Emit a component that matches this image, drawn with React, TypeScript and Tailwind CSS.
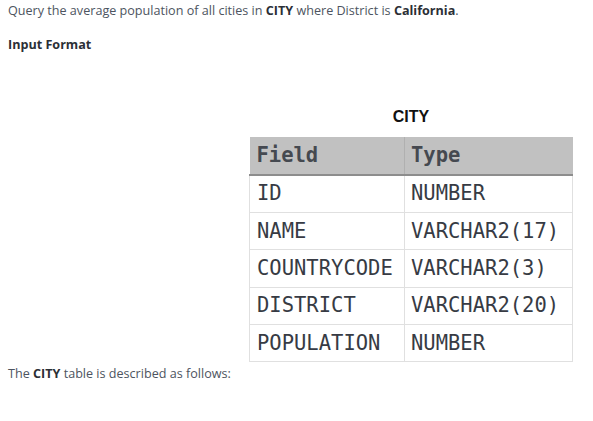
import React from "react";

const rows: [string, string][] = [
  ["ID", "NUMBER"],
  ["NAME", "VARCHAR2(17)"],
  ["COUNTRYCODE", "VARCHAR2(3)"],
  ["DISTRICT", "VARCHAR2(20)"],
  ["POPULATION", "NUMBER"],
];

export default function App() {
  return (
    <div className="w-[593px] h-[421px] bg-white text-[#4d5460] text-[12.6px] leading-[19px]" style={{ fontFamily: '"Open Sans", sans-serif' }}>
      <div className="pl-[8px] pt-[1px]">
        <p>
          Query the average population of all cities in <b className="text-[#2b2f36]">CITY</b> where District is{" "}
          <b className="text-[#2b2f36]">California</b>.
        </p>
        <p className="mt-[15px] font-bold text-[#2b2f36]">Input Format</p>
      </div>
      <div className="flex flex-col items-end pr-[20px] mt-[53px]">
        <div className="w-[324px] flex flex-col">
          <div className="text-center font-bold text-[16px] leading-[20px] text-[#111]" style={{ fontFamily: '"Liberation Sans", Arial, sans-serif' }}>CITY</div>
          <table className="mt-[10px] border-collapse text-[20.5px] text-[#373b44]" style={{ fontFamily: '"DejaVu Sans Mono", monospace' }}>
            <thead>
              <tr className="bg-[#c1c1c1] h-[38px] border-b-[2px] border-[#8d8d8d]">
                <th className="w-[155px] text-left font-bold pl-[7px] border-r border-[#b0b0b0] text-[#454950]">Field</th>
                <th className="text-left font-bold pl-[6px] text-[#454950]">Type</th>
              </tr>
            </thead>
            <tbody>
              {rows.map(([f, t]) => (
                <tr key={f} className="h-[37.4px] border-b border-[#e0e0e0]">
                  <td className="pl-[7px] border-l border-r border-[#e0e0e0]">{f}</td>
                  <td className="pl-[6px] border-r border-[#e0e0e0]">{t}</td>
                </tr>
              ))}
            </tbody>
          </table>
        </div>
      </div>
      <div className="pl-[8px] mt-[2px]">
        <p>
          The <b className="text-[#2b2f36]">CITY</b> table is described as follows:
        </p>
      </div>
    </div>
  );
}
